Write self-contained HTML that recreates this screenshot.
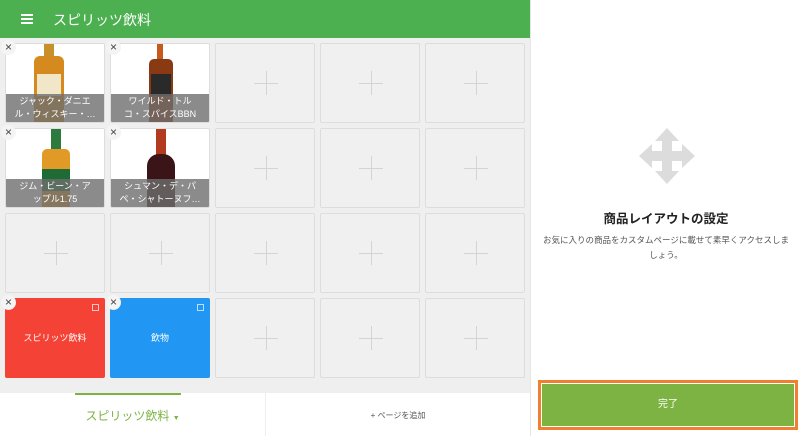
<!DOCTYPE html>
<html><head><meta charset="utf-8"><style>
*{box-sizing:border-box;margin:0;padding:0}
body{width:800px;height:436px;overflow:hidden;font-family:"Liberation Sans","Noto Sans CJK JP",sans-serif;background:#fff;position:relative}
.hdr{position:absolute;left:0;top:0;width:530px;height:38px;background:#4caf50;color:#fff}
.hdr .t{position:absolute;left:53px;top:10px;font-size:14px}
.ham{position:absolute;left:21px;top:14px;width:12px;height:2px;background:#fff;box-shadow:0 4px 0 #fff,0 8px 0 #fff}
.grid{position:absolute;left:0;top:38px;width:530px;height:355px;background:#efefef}
.c{position:absolute;width:100px;height:80px;border:1px solid #ddd;border-radius:2px;background:#f0f0f0}
.c.e::before{content:"";position:absolute;left:38px;top:39px;width:24px;height:1px;background:#d4d4d4}
.c.e::after{content:"";position:absolute;left:50px;top:27px;width:1px;height:24px;background:#d4d4d4}
.c.p{background:#fff;overflow:hidden}
.lab{position:absolute;left:0;bottom:0;width:100%;height:28px;background:rgba(110,110,110,.8);color:#fff;font-size:9px;text-align:center;line-height:13px;padding-top:1px}
.x{position:absolute;width:15px;height:15px;border-radius:8px;background:#f4f4f4;font-size:12px;line-height:14px;text-align:center;color:#444;z-index:2}
.cat{color:#fff;font-size:9px;text-align:center;line-height:80px;border:none}
.cp{position:absolute;right:6px;top:6px;width:7px;height:7px;border:1px solid rgba(255,255,255,.7)}
.right{position:absolute;left:530px;top:0;width:270px;height:436px;border-left:1px solid #e5e5e5;background:#fff}
.bot{position:absolute;left:0;top:393px;width:530px;height:43px;background:#fff}
</style></head><body>
<div class="hdr"><div class="ham"></div><div class="t">スピリッツ飲料</div></div>
<div class="grid"></div>
<div class="c p" style="left:5px;top:43px">
 <div style="position:absolute;left:38px;top:0;width:10px;height:12px;background:#c8902a"></div>
 <div style="position:absolute;left:28px;top:12px;width:30px;height:70px;background:#d58a20;border-radius:6px 6px 0 0"></div>
 <div style="position:absolute;left:31px;top:30px;width:24px;height:22px;background:#f1e6c8"></div>
 <div class="lab">ジャック・ダニエ<br>ル・ウィスキー・…</div></div>
<div class="c p" style="left:110px;top:43px">
 <div style="position:absolute;left:46px;top:0;width:6px;height:15px;background:#c55a1c"></div>
 <div style="position:absolute;left:38px;top:15px;width:24px;height:70px;background:#8a3a12;border-radius:5px 5px 0 0"></div>
 <div style="position:absolute;left:40px;top:30px;width:20px;height:22px;background:#2a2a2a"></div>
 <div class="lab">ワイルド・トル<br>コ・スパイスBBN</div></div>
<div class="c e" style="left:215px;top:43px"></div>
<div class="c e" style="left:320px;top:43px"></div>
<div class="c e" style="left:425px;top:43px"></div>
<div class="c p" style="left:5px;top:128px">
 <div style="position:absolute;left:45px;top:0;width:10px;height:20px;background:#2c7a3e"></div>
 <div style="position:absolute;left:36px;top:20px;width:28px;height:62px;background:#e19a25;border-radius:5px 5px 0 0"></div>
 <div style="position:absolute;left:36px;top:40px;width:28px;height:22px;background:#1f6b35"></div>
 <div class="lab">ジム・ビーン・ア<br>ップル1.75</div></div>
<div class="c p" style="left:110px;top:128px">
 <div style="position:absolute;left:45px;top:0;width:10px;height:30px;background:#b23a1f"></div>
 <div style="position:absolute;left:36px;top:25px;width:28px;height:60px;background:#3a1416;border-radius:12px 12px 0 0"></div>
 <div class="lab">シュマン・デ・パ<br>ペ・シャトーヌフ…</div></div>
<div class="c e" style="left:215px;top:128px"></div>
<div class="c e" style="left:320px;top:128px"></div>
<div class="c e" style="left:425px;top:128px"></div>
<div class="c e" style="left:5px;top:213px"></div>
<div class="c e" style="left:110px;top:213px"></div>
<div class="c e" style="left:215px;top:213px"></div>
<div class="c e" style="left:320px;top:213px"></div>
<div class="c e" style="left:425px;top:213px"></div>
<div class="c cat" style="left:5px;top:298px;background:#f44336">スピリッツ飲料<div class="cp"></div></div>
<div class="c cat" style="left:110px;top:298px;background:#2196f3">飲物<div class="cp"></div></div>
<div class="c e" style="left:215px;top:298px"></div>
<div class="c e" style="left:320px;top:298px"></div>
<div class="c e" style="left:425px;top:298px"></div>
<div class="x" style="left:1px;top:40px">×</div>
<div class="x" style="left:106px;top:40px">×</div>
<div class="x" style="left:1px;top:125px">×</div>
<div class="x" style="left:106px;top:125px">×</div>
<div class="x" style="left:1px;top:295px">×</div>
<div class="x" style="left:106px;top:295px">×</div>
<div class="bot">
 <div style="position:absolute;left:75px;top:0;width:106px;height:2px;background:#7cb342"></div>
 <div style="position:absolute;left:0;top:14px;width:265px;text-align:center;color:#7cb342;font-size:12px">スピリッツ飲料 <span style="font-size:7px">▼</span></div>
 <div style="position:absolute;left:265px;top:0;width:1px;height:43px;background:#eee"></div>
 <div style="position:absolute;left:266px;top:17px;width:264px;text-align:center;color:#555;font-size:8px">+ ページを追加</div>
</div>
<div class="right">
 <svg style="position:absolute;left:108px;top:128px" width="56" height="56" viewBox="0 0 56 56"><path fill="#dcdcdc" d="M28 0L40 13H33V23H43V16L56 28L43 40V33H33V43H40L28 56L16 43H23V33H13V40L0 28L13 16V23H23V13H16Z"/></svg>
 <div style="position:absolute;left:0;top:208px;width:270px;text-align:center;font-size:12.5px;font-weight:bold;color:#222">商品レイアウトの設定</div>
 <div style="position:absolute;left:8px;top:233px;width:254px;text-align:center;font-size:8.5px;line-height:15px;color:#555">お気に入りの商品をカスタムページに載せて素早くアクセスしましょう。</div>
 <div style="position:absolute;left:7px;top:380px;width:260px;height:50px;border:3px solid #f08030;background:#fff;padding:1px">
  <div style="width:100%;height:100%;background:#7cb342;color:#fff;font-size:10px;text-align:center;line-height:42px">完了</div>
 </div>
</div>
</body></html>
